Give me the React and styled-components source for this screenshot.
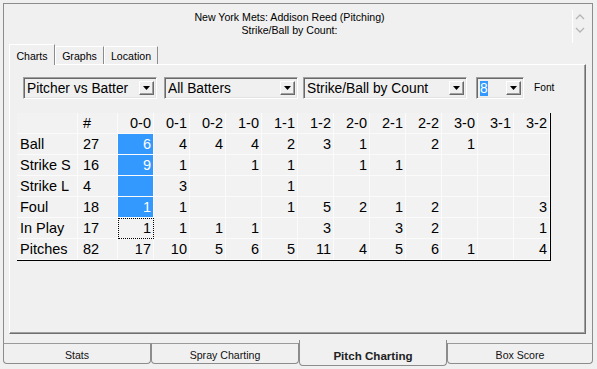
import React from "react";
import styled, { createGlobalStyle } from "styled-components";

const Global = createGlobalStyle`
  html, body { margin: 0; padding: 0; background: #f0f0f0; }
  * { box-sizing: border-box; }
`;

const Root = styled.div`
  width: 597px;
  height: 369px;
  overflow: hidden;
  background: #f0f0f0;
  font-family: "Liberation Sans", Arial, sans-serif;
  color: #000;
  padding: 3px 0 0 3px;
`;

const Frame = styled.div`
  width: 590px;
  height: 340px;
  border: 1px solid #8c8c8c;
  border-bottom: none;
  display: flex;
  flex-direction: column;
`;

const Header = styled.div`
  height: 40px;
  display: flex;
`;

const Title = styled.div`
  flex: 1;
  padding: 7px 0 0 3px;
  text-align: center;
  font-size: 10.6px;
  line-height: 13px;
`;

const ScrollCol = styled.div`
  width: 20px;
  margin: 6px 0 1px 0;
  border-left: 1px solid #ffffff;
  display: flex;
  flex-direction: column;
  align-items: flex-start;
  padding: 4px 0 0 2px;
  gap: 7px;
`;

const TabControl = styled.div`
  margin: 0 6px 0 5px;
  display: flex;
  flex-direction: column;
`;

const TabStrip = styled.div`
  height: 20px;
  display: flex;
  align-items: flex-end;
  position: relative;
  z-index: 1;
`;

const Tab = styled.div`
  height: ${(p) => (p.$active ? "21px" : "18px")};
  margin-bottom: ${(p) => (p.$active ? "-1px" : "0")};
  width: ${(p) => p.$w}px;
  background: #f0f0f0;
  border-top: 1px solid #ffffff;
  border-left: 1px solid #ffffff;
  border-right: 1px solid #8c8c8c;
  font-size: 10.6px;
  display: flex;
  justify-content: center;
  padding-top: ${(p) => (p.$active ? "5px" : "3px")};
`;

const Panel = styled.div`
  height: 270px;
  border-top: 1px solid #ffffff;
  border-left: 1px solid #ffffff;
  border-right: 1px solid #6f6f6f;
  border-bottom: 1px solid #6f6f6f;
  box-shadow: inset -1px -1px 0 #a0a0a0;
  padding: 12px 0 0 7px;
  display: flex;
  flex-direction: column;
`;

const Toolbar = styled.div`
  display: flex;
  align-items: center;
  height: 22px;
  margin-left: 6px;
`;

const Combo = styled.div`
  width: ${(p) => p.$w}px;
  margin-right: ${(p) => p.$gap}px;
  height: 22px;
  border: 1px solid;
  border-color: #a0a0a0 #ffffff #ffffff #a0a0a0;
  box-shadow: inset 1px 1px 0 #696969, inset -1px -1px 0 #e3e3e3;
  display: flex;
  align-items: center;
  padding: 0 2px 0 3px;
  font-size: 13.8px;
  background: #f0f0f0;
`;

const ComboText = styled.span`
  flex: 1;
  white-space: nowrap;
  overflow: hidden;
`;

const Highlight = styled.span`
  background: #3399ff;
  color: #fff;
  padding: 1px 0;
`;

const DropButton = styled.div`
  width: 15px;
  height: 14px;
  border: 1px solid;
  border-color: #ffffff #696969 #696969 #ffffff;
  box-shadow: inset -1px -1px 0 #a0a0a0;
  display: flex;
  align-items: center;
  justify-content: center;
  background: #f0f0f0;
`;

const FontLabel = styled.span`
  font-size: 10.2px;
  margin-top: -1px;
`;

const Grid = styled.div`
  margin-top: 14px;
  display: grid;
  grid-template-columns: 61px 40px repeat(12, 36px);
  grid-auto-rows: 21px;
  width: 534px;
  border-right: 1px solid #000;
  border-bottom: 1px solid #000;
  font-size: 14.5px;
  background: #f2f2f2;
`;

const Cell = styled.div`
  border-right: 1px solid #fbfbfb;
  border-bottom: 1px solid #fbfbfb;
  display: flex;
  align-items: center;
  white-space: nowrap;
  justify-content: ${(p) => (p.$align === "right" ? "flex-end" : "flex-start")};
  padding: ${(p) =>
    p.$align === "right" ? "0 2px 0 0" : p.$kind === "num" ? "0 0 0 5px" : "0 0 0 3px"};
  background: ${(p) => (p.$sel ? "#3399ff" : "transparent")};
  color: ${(p) => (p.$sel ? "#fff" : "#000")};
  outline: ${(p) => (p.$focus ? "1px dotted #000" : "none")};
  outline-offset: -1px;
`;

const BottomBar = styled.div`
  display: flex;
  align-items: flex-start;
  width: 590px;
`;

const BottomTab = styled.div`
  flex: 0 0 ${(p) => p.$w}px;
  height: ${(p) => (p.$active ? "26px" : "21px")};
  margin-top: ${(p) => (p.$active ? "-3px" : "0")};
  border: 1px solid #8c8c8c;
  border-top: ${(p) => (p.$active ? "none" : "1px solid #9a9a9a")};
  border-radius: 0 0 4px 4px;
  background: #f0f0f0;
  display: flex;
  justify-content: center;
  align-items: center;
  padding-top: ${(p) => (p.$active ? "5px" : "2px")};
  font-size: ${(p) => (p.$active ? "11.6px" : "10.6px")};
  font-weight: ${(p) => (p.$active ? "bold" : "normal")};
  color: ${(p) => (p.$active ? "#222" : "#111")};
  position: relative;
  z-index: ${(p) => (p.$active ? 1 : 0)};
`;

const Chevron = ({ up }) => (
  <svg width="10" height="6" viewBox="0 0 10 6">
    <path
      d={up ? "M1 5 L5 1 L9 5" : "M1 1 L5 5 L9 1"}
      fill="none"
      stroke="#b4b4b4"
      strokeWidth="1.3"
    />
  </svg>
);

const Arrow = () => (
  <svg width="7" height="4" viewBox="0 0 7 4">
    <path d="M0 0 H7 L3.5 4 Z" fill="#000" />
  </svg>
);

const counts = ["0-0", "0-1", "0-2", "1-0", "1-1", "1-2", "2-0", "2-1", "2-2", "3-0", "3-1", "3-2"];

const rows = [
  ["Ball", "27", ["6", "4", "4", "4", "2", "3", "1", "", "2", "1", "", ""]],
  ["Strike S", "16", ["9", "1", "", "1", "1", "", "1", "1", "", "", "", ""]],
  ["Strike L", "4", ["", "3", "", "", "1", "", "", "", "", "", "", ""]],
  ["Foul", "18", ["1", "1", "", "", "1", "5", "2", "1", "2", "", "", "3"]],
  ["In Play", "17", ["1", "1", "1", "1", "", "3", "", "3", "2", "", "", "1"]],
  ["Pitches", "82", ["17", "10", "5", "6", "5", "11", "4", "5", "6", "1", "", "4"]],
];

const combos = [
  { w: 134, gap: 7, text: "Pitcher vs Batter" },
  { w: 134, gap: 5, text: "All Batters" },
  { w: 164, gap: 9, text: "Strike/Ball by Count" },
];

export default function App() {
  return (
    <Root>
      <Global />
      <Frame>
        <Header>
          <Title>
            <div>New York Mets: Addison Reed (Pitching)</div>
            <div>Strike/Ball by Count:</div>
          </Title>
          <ScrollCol>
            <Chevron up />
            <Chevron />
          </ScrollCol>
        </Header>
        <TabControl>
          <TabStrip>
            <Tab $active $w={46}>Charts</Tab>
            <Tab $w={49}>Graphs</Tab>
            <Tab $w={54}>Location</Tab>
          </TabStrip>
          <Panel>
            <Toolbar>
              {combos.map((c) => (
                <Combo key={c.text} $w={c.w} $gap={c.gap}>
                  <ComboText>{c.text}</ComboText>
                  <DropButton>
                    <Arrow />
                  </DropButton>
                </Combo>
              ))}
              <Combo $w={48} $gap={10}>
                <ComboText>
                  <Highlight>8</Highlight>
                </ComboText>
                <DropButton>
                  <Arrow />
                </DropButton>
              </Combo>
              <FontLabel>Font</FontLabel>
            </Toolbar>
            <Grid>
              <Cell />
              <Cell $kind="num">#</Cell>
              {counts.map((c) => (
                <Cell key={c} $align="right">{c}</Cell>
              ))}
              {rows.map(([label, total, vals], ri) => (
                <React.Fragment key={label}>
                  <Cell>{label}</Cell>
                  <Cell $kind="num">{total}</Cell>
                  {vals.map((v, ci) => (
                    <Cell
                      key={ci}
                      $align="right"
                      $sel={ci === 0 && ri < 4}
                      $focus={ci === 0 && ri === 4}
                    >
                      {v}
                    </Cell>
                  ))}
                </React.Fragment>
              ))}
            </Grid>
          </Panel>
        </TabControl>
      </Frame>
      <BottomBar>
        <BottomTab $w={148}>Stats</BottomTab>
        <BottomTab $w={148}>Spray Charting</BottomTab>
        <BottomTab $w={148} $active>Pitch Charting</BottomTab>
        <BottomTab $w={146}>Box Score</BottomTab>
      </BottomBar>
    </Root>
  );
}
